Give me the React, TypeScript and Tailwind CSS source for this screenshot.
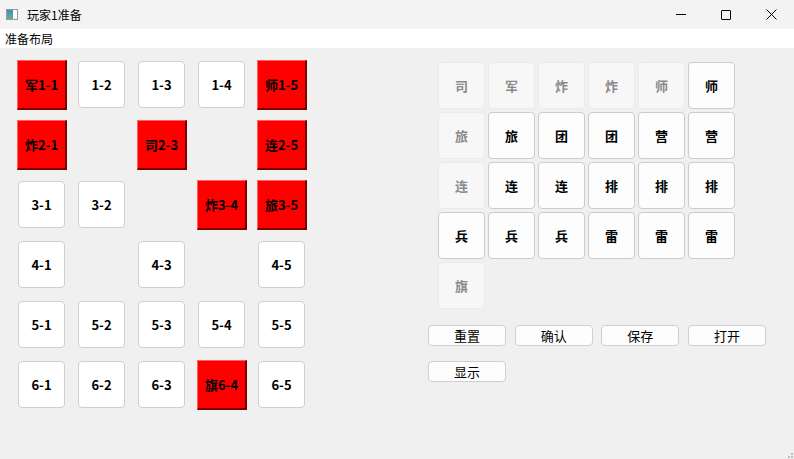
import React from "react";

const font = "font-['Microsoft_YaHei','Noto_Sans_CJK_SC',sans-serif]";

type Cell = { label: string; red?: boolean } | null;

const board: Cell[][] = [
  [{ label: "军1-1", red: true }, { label: "1-2" }, { label: "1-3" }, { label: "1-4" }, { label: "师1-5", red: true }],
  [{ label: "炸2-1", red: true }, null, { label: "司2-3", red: true }, null, { label: "连2-5", red: true }],
  [{ label: "3-1" }, { label: "3-2" }, null, { label: "炸3-4", red: true }, { label: "旅3-5", red: true }],
  [{ label: "4-1" }, null, { label: "4-3" }, null, { label: "4-5" }],
  [{ label: "5-1" }, { label: "5-2" }, { label: "5-3" }, { label: "5-4" }, { label: "5-5" }],
  [{ label: "6-1" }, { label: "6-2" }, { label: "6-3" }, { label: "旗6-4", red: true }, { label: "6-5" }],
];

// [label, enabled]
const pieces: [string, boolean][] = [
  ["司", false], ["军", false], ["炸", false], ["炸", false], ["师", false], ["师", true],
  ["旅", false], ["旅", true], ["团", true], ["团", true], ["营", true], ["营", true],
  ["连", false], ["连", true], ["连", true], ["排", true], ["排", true], ["排", true],
  ["兵", true], ["兵", true], ["兵", true], ["雷", true], ["雷", true], ["雷", true],
  ["旗", false],
];

function BoardCell({ cell }: { cell: Cell }) {
  if (!cell) return <div className="w-[50px] h-[50px]" />;
  if (cell.red) {
    return (
      <div className="w-[50px] h-[50px] flex items-start">
        <div className="w-[50px] h-[50px] bg-[#ff0000] border-t border-l border-[#ff6060] border-r-2 border-b-2 border-r-[#7a0000] border-b-[#7a0000] flex items-center justify-center text-[13px] font-bold text-black">
          {cell.label}
        </div>
      </div>
    );
  }
  return (
    <div className="w-[50px] h-[50px] pt-[1px] pl-[1px]">
      <div className="w-[47px] h-[47px] bg-white border border-[#cfcfcf] rounded-[4px] flex items-center justify-center text-[13px] font-bold text-black">
        {cell.label}
      </div>
    </div>
  );
}

function PieceBtn({ label, enabled }: { label: string; enabled: boolean }) {
  return (
    <div
      className={
        enabled
          ? "w-[47px] h-[47px] bg-[#fdfdfd] border border-[#cccccc] rounded-[4px] flex items-center justify-center text-[13px] font-bold text-black"
          : "w-[47px] h-[47px] bg-[#f7f7f7] border border-[#ebebeb] rounded-[4px] flex items-center justify-center text-[13px] font-bold text-[#8a8a8a]"
      }
    >
      {label}
    </div>
  );
}

function ActionBtn({ label }: { label: string }) {
  return (
    <div className="w-[78px] h-[21px] bg-[#fdfdfd] border border-[#d0d0d0] rounded-[4px] flex items-center justify-center text-[13px] text-black">
      {label}
    </div>
  );
}

export default function App() {
  return (
    <div className={`w-[794px] h-[459px] bg-[#f0f0f0] flex flex-col ${font} relative overflow-hidden`}>
      {/* title bar */}
      <div className="h-[29px] bg-[#f3f3f3] flex items-center">
        <div className="ml-[6px] w-[12px] h-[11px] border border-[#9a9a9a] bg-white flex">
          <div className="w-[6px] h-full bg-gradient-to-b from-[#3d8fc8] to-[#6cb070]" />
        </div>
        <span className="ml-[9px] text-[12px] text-black">玩家1准备</span>
        <div className="ml-auto flex items-center h-full">
          <div className="w-[45px] h-full flex items-center justify-center">
            <div className="w-[10px] h-[1px] bg-black" />
          </div>
          <div className="w-[45px] h-full flex items-center justify-center">
            <div className="w-[10px] h-[10px] border border-black rounded-[1px]" />
          </div>
          <div className="w-[46px] h-full flex items-center justify-center">
            <svg width="11" height="11" viewBox="0 0 11 11">
              <path d="M0.5 0.5 L10.5 10.5 M10.5 0.5 L0.5 10.5" stroke="#000" strokeWidth="1" />
            </svg>
          </div>
        </div>
      </div>
      {/* menu bar */}
      <div className="h-[19px] bg-white flex items-center">
        <span className="ml-[5px] text-[12px] text-black">准备布局</span>
      </div>
      {/* body */}
      <div className="flex flex-row">
        <div className="pl-[17px] pt-[12px] grid grid-cols-[repeat(5,50px)] gap-[10px]">
          {board.flat().map((c, i) => (
            <BoardCell key={i} cell={c} />
          ))}
        </div>
        <div className="ml-[121px] flex flex-col">
          <div className="ml-[10px] mt-[14px] grid grid-cols-[repeat(6,47px)] gap-[3px]">
            {pieces.map(([l, e], i) => (
              <PieceBtn key={i} label={l} enabled={e} />
            ))}
          </div>
          <div className="mt-[16px] flex gap-[8.7px]">
            <ActionBtn label="重置" />
            <ActionBtn label="确认" />
            <ActionBtn label="保存" />
            <ActionBtn label="打开" />
          </div>
          <div className="mt-[15px] flex">
            <ActionBtn label="显示" />
          </div>
        </div>
      </div>
      {/* size grip */}
      <div className="absolute right-[1px] bottom-[1px] grid grid-cols-2 gap-[1px]">
        <div className="w-[2px] h-[2px]" />
        <div className="w-[2px] h-[2px] bg-[#c0c0c0]" />
        <div className="w-[2px] h-[2px] bg-[#c0c0c0]" />
        <div className="w-[2px] h-[2px] bg-[#c0c0c0]" />
      </div>
    </div>
  );
}
